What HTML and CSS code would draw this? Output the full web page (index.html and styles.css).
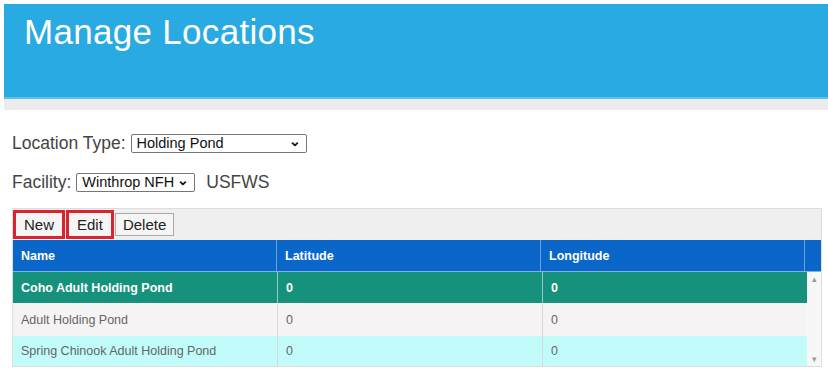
FILE: index.html
```html
<!DOCTYPE html>
<html lang="en">
<head>
  <meta charset="UTF-8" />
  <title>Manage Locations</title>
  <link rel="stylesheet" href="styles.css">
</head>
<body>

  <div class="banner">
    <h1>Manage Locations</h1>
  </div>
  <div class="banner-strip"></div>

  <div class="filters">
    <div class="filter-row">
      <label for="loc-type">Location Type:</label>
      <div class="select wide" id="loc-type">Holding Pond <span class="chev">&#8964;</span></div>
    </div>
    <div class="filter-row">
      <label for="facility">Facility:</label>
      <div class="select" id="facility">Winthrop NFH <span class="chev">&#8964;</span></div>
      <span class="agency">USFWS</span>
    </div>
  </div>

  <div class="grid">
    <div class="toolbar">
      <button class="tool-btn marked">New</button>
      <button class="tool-btn marked">Edit</button>
      <button class="tool-btn plain">Delete</button>
    </div>
    <div class="grid-head">
      <div class="cell">Name</div>
      <div class="cell">Latitude</div>
      <div class="cell">Longitude</div>
      <div class="cell scroll-cap"></div>
    </div>
    <div class="grid-body">
      <div class="rows">
        <div class="row selected">
          <div class="cell">Coho Adult Holding Pond</div>
          <div class="cell">0</div>
          <div class="cell">0</div>
        </div>
        <div class="row">
          <div class="cell">Adult Holding Pond</div>
          <div class="cell">0</div>
          <div class="cell">0</div>
        </div>
        <div class="row alt">
          <div class="cell">Spring Chinook Adult Holding Pond</div>
          <div class="cell">0</div>
          <div class="cell">0</div>
        </div>
      </div>
      <div class="scrollbar">
        <span class="arrow">&#9652;</span>
        <span class="arrow">&#9662;</span>
      </div>
    </div>
  </div>

</body>
</html>
```

FILE: styles.css
```css
* {
  margin: 0;
  padding: 0;
  box-sizing: border-box;
  font-family: 'Liberation Sans', Arial, sans-serif;
}

body {
  background: #fff;
  color: #333;
  width: 828px;
  height: 369px;
  overflow: hidden;
  padding-top: 4px;
}

.banner {
  margin-left: 4px;
  height: 95px;
  background: #29aae2;
  border-bottom: 2px solid #5cc0ea;
  padding: 8px 0 0 20px;
}

.banner h1 {
  color: #fff;
  font-weight: normal;
  font-size: 35px;
  letter-spacing: 0.3px;
}

.banner-strip {
  margin-left: 4px;
  height: 11px;
  background: #ececec;
}

.filters {
  padding: 23px 0 0 12px;
}

.filter-row {
  display: flex;
  align-items: center;
  height: 20px;
  margin-bottom: 19px;
  font-size: 17.5px;
  color: #444;
}

.filter-row label {
  margin-right: 5px;
}

.select {
  display: flex;
  align-items: center;
  justify-content: space-between;
  height: 19px;
  border: 1px solid #767676;
  border-radius: 2px;
  padding: 0 5px 0 5px;
  font-size: 14.5px;
  color: #111;
  width: 119px;
  white-space: nowrap;
}

.select.wide {
  width: 176px;
}

.chev {
  font-size: 14px;
  font-weight: bold;
  line-height: 8px;
  height: 12px;
}

.agency {
  margin-left: 11px;
}

.grid {
  margin: -3px 6px 0 12px;
  border: 1px solid #ddd;
}

.toolbar {
  display: flex;
  align-items: center;
  height: 31px;
  background: #efefef;
}

.tool-btn {
  font-size: 15px;
  color: #222;
  background: #f5f5f5;
  border: 1px solid #aaa;
  height: 23px;
  padding: 0 8px;
}

.tool-btn.marked {
  height: 29px;
  border: 3px solid #d9232e;
  margin-right: 1px;
}

.tool-btn.plain {
  padding: 0 7px;
}

.grid-head {
  display: flex;
  height: 32px;
  background: #0a66c9;
  border-bottom: 1px solid #7fb3e6;
}

.cell {
  width: 265px;
  display: flex;
  align-items: center;
  padding-left: 8px;
  font-size: 12.5px;
  border-right: 1px solid #d8d8d8;
}

.grid-head .cell {
  color: #fff;
  font-weight: bold;
  border-right-color: #6aa2e0;
}

.grid-head .cell.scroll-cap {
  width: 16px;
  border-right: none;
}

.grid-body {
  display: flex;
}

.rows {
  width: 794px;
}

.row {
  display: flex;
  height: 32px;
  background: #f5f3f3;
  color: #666;
}

.row .cell:last-child {
  width: 264px;
  border-right: none;
}

.row.selected {
  background: #16917c;
  color: #fff;
  font-weight: bold;
  height: 31px;
  margin-bottom: 1px;
}

.row.selected .cell {
  border-right-color: #8ccfc3;
}

.row.alt {
  background: #c2fcfa;
  height: 30px;
}

.scrollbar {
  flex: 1;
  display: flex;
  flex-direction: column;
  justify-content: space-between;
  align-items: center;
  background: #f7f7f7;
  padding: 2px 0 2px;
  color: #999;
  font-size: 9px;
}
```
